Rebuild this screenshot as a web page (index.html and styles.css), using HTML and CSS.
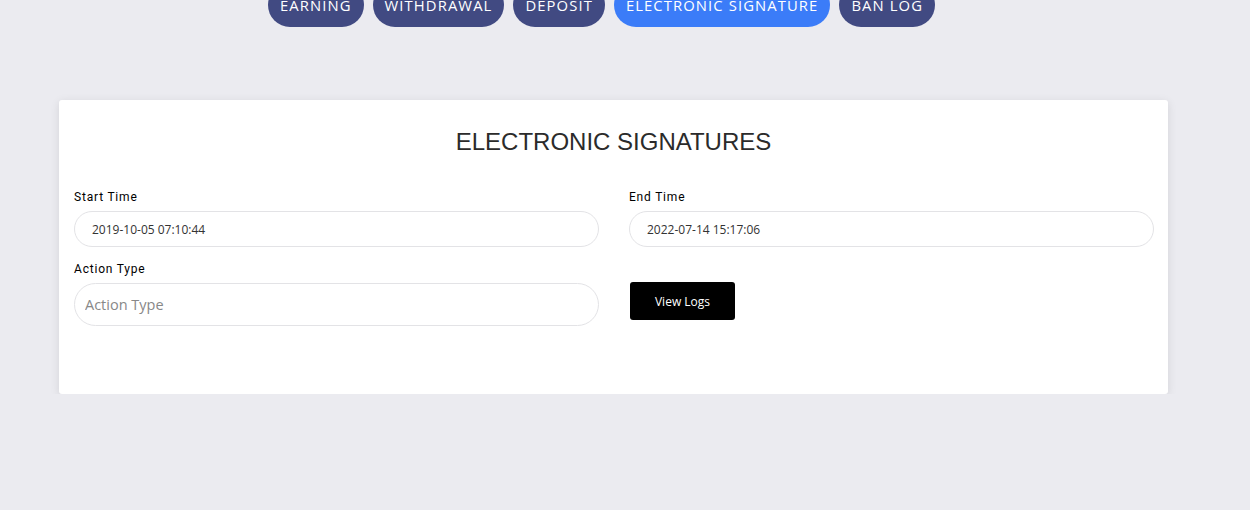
FILE: index.html
```html
<!DOCTYPE html>
<html lang="en">
<head>
  <meta charset="UTF-8" />
  <meta name="viewport" content="width=device-width, initial-scale=1" />
  <title>Electronic Signatures</title>
  <link rel="stylesheet" href="styles.css">
</head>
<body>

  <nav class="tabs">
    <a class="tab">Earning</a>
    <a class="tab">Withdrawal</a>
    <a class="tab">Deposit</a>
    <a class="tab active">Electronic Signature</a>
    <a class="tab">Ban Log</a>
  </nav>

  <div class="card">
    <h2 class="card-title">ELECTRONIC SIGNATURES</h2>

    <div class="form-grid">
      <div class="field">
        <label>Start Time</label>
        <input class="date-input" type="text" value="2019-10-05 07:10:44">
      </div>
      <div class="field">
        <label>End Time</label>
        <input class="date-input" type="text" value="2022-07-14 15:17:06">
      </div>
      <div class="field">
        <label>Action Type</label>
        <input class="type-input" type="text" placeholder="Action Type">
      </div>
      <div class="field action-cell">
        <button class="view-btn">View Logs</button>
      </div>
    </div>
  </div>

</body>
</html>
```

FILE: styles.css
```css
body {
  margin: 0;
  background-color: #ebebf0;
  font-family: "Open Sans", sans-serif;
  overflow: hidden;
}
.tabs {
  display: flex;
  gap: 9px;
  padding-left: 268px;
  margin-top: -17px;
}
.tab {
  display: flex;
  align-items: center;
  height: 44px;
  padding: 0 12px;
  background-color: #414a82;
  color: #fff;
  border-radius: 22px;
  font-size: 14.8px;
  text-transform: uppercase;
  letter-spacing: 1.1px;
}
.tab.active {
  background-color: #3b7cf8;
}
.card {
  width: 1079px;
  margin: 73px 0 0 59px;
  padding: 27px 15px 68px;
  background-color: #fff;
  border-radius: 3px;
  box-shadow: 0 2px 10px rgba(0,0,0,0.1);
}
.card-title {
  margin: 0 0 31px;
  text-align: center;
  font-family: "Liberation Sans", Arial, sans-serif;
  font-weight: normal;
  font-size: 24px;
  line-height: 30px;
  color: #2b2b2b;
}
.form-grid {
  display: grid;
  grid-template-columns: 525px 525px;
  column-gap: 30px;
  row-gap: 13px;
}
.field label {
  display: block;
  font-family: Roboto, sans-serif;
  font-size: 12px;
  line-height: 18px;
  letter-spacing: 0.8px;
  color: #000;
  margin-bottom: 5px;
}
.date-input,
.type-input {
  box-sizing: border-box;
  width: 100%;
  border: 1px solid #e3e3e6;
  background: #fff;
  font-family: "Open Sans", sans-serif;
  outline: none;
}
.date-input {
  height: 36px;
  border-radius: 18px;
  padding: 0 17px;
  font-size: 12px;
  color: #333;
}
.type-input {
  height: 43px;
  border-radius: 22px;
  padding: 0 10px;
  font-size: 14.5px;
}
.type-input::placeholder {
  color: #888;
}
.action-cell {
  padding-top: 22px;
  padding-left: 1px;
}
.view-btn {
  width: 105px;
  height: 38px;
  background-color: #000;
  color: #fff;
  border: none;
  border-radius: 3px;
  font-family: "Open Sans", sans-serif;
  font-size: 12px;
  cursor: pointer;
}
```
